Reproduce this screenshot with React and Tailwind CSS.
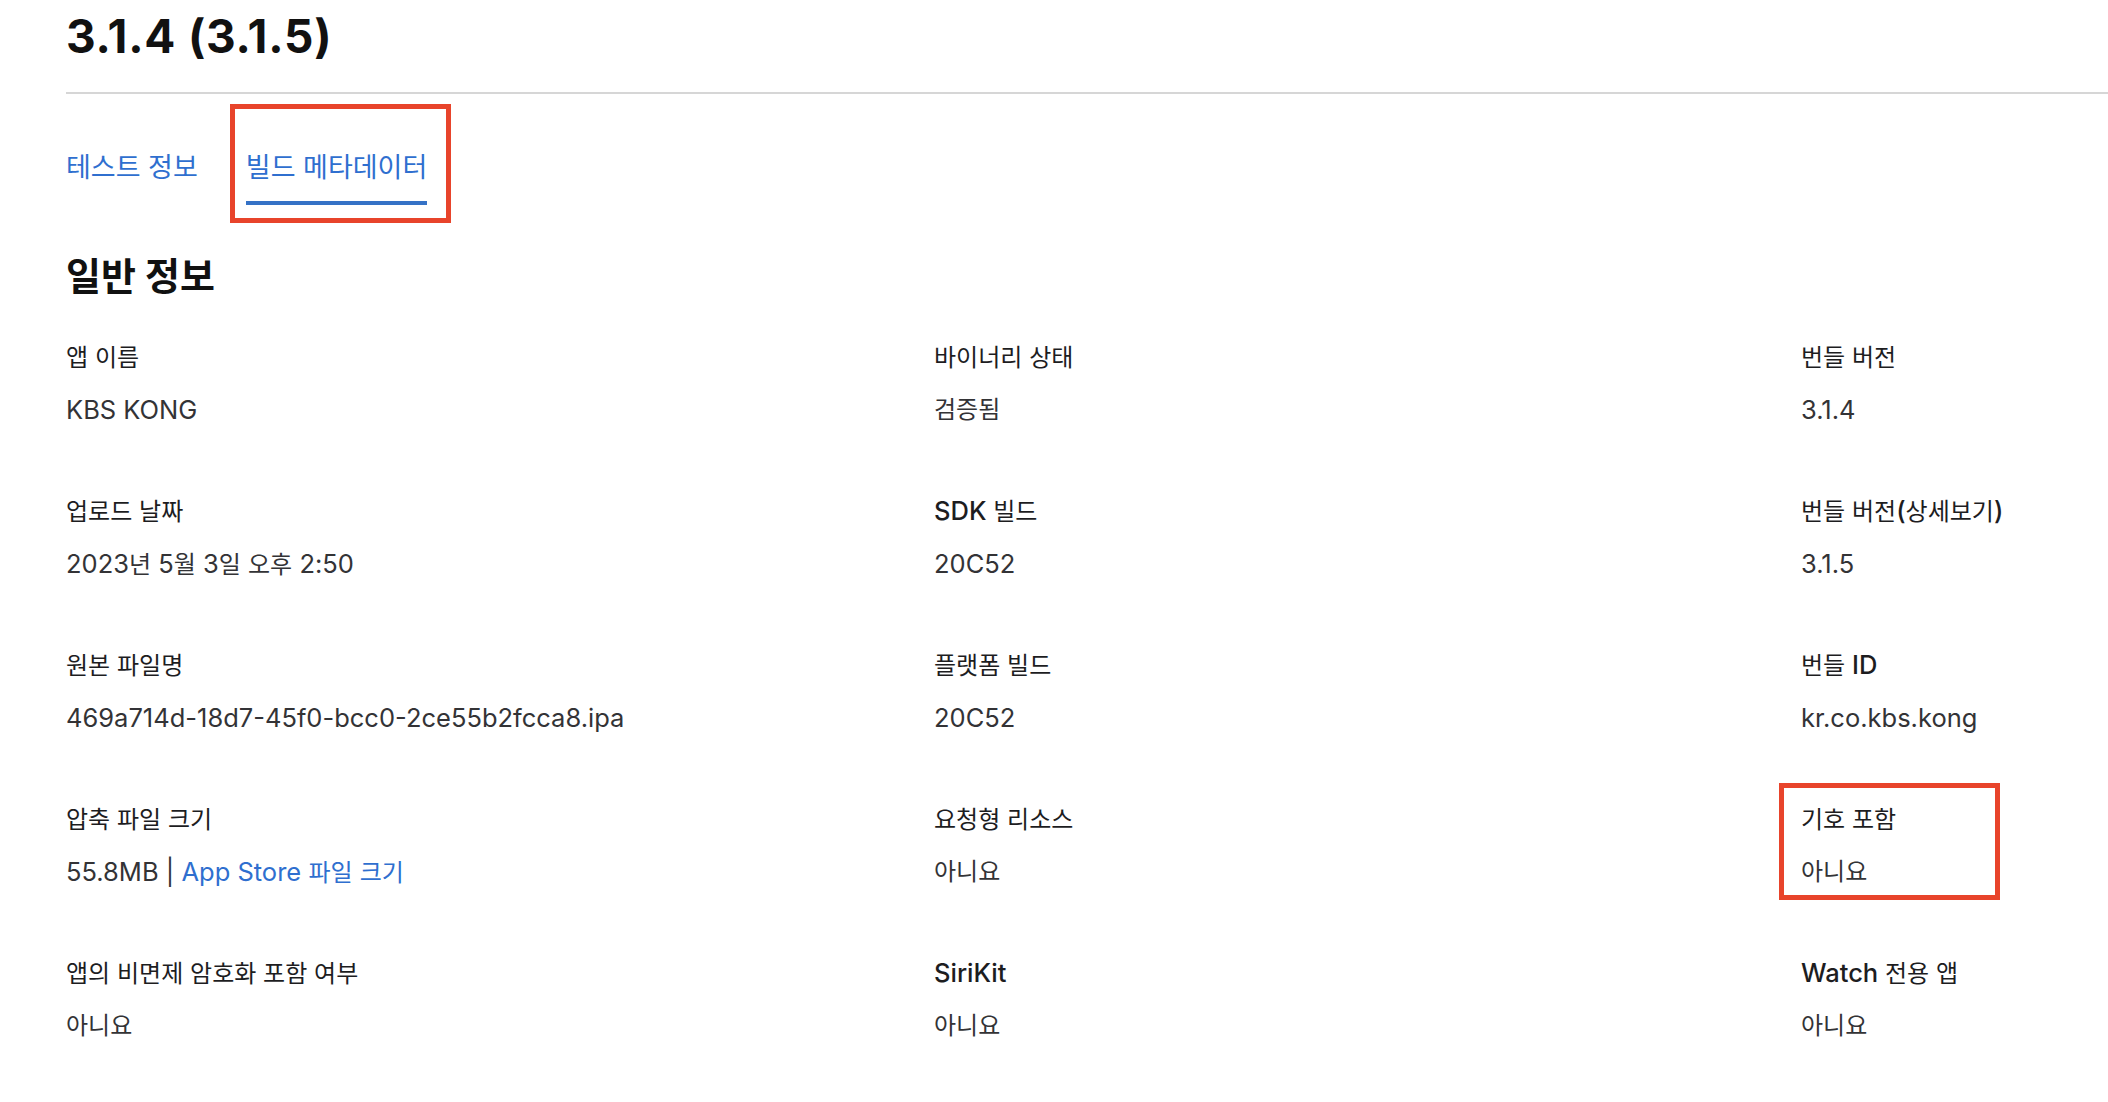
import React from "react";

const HANGUL = /([\u1100-\u11FF\u3130-\u318F\uAC00-\uD7AF]+)/;
const IS_HANGUL = /^[\u1100-\u11FF\u3130-\u318F\uAC00-\uD7AF]+$/;

function T({ text, label }) {
  return text.split(HANGUL).map((p, i) =>
    p === "" ? null : IS_HANGUL.test(p) ? (
      <span key={i} className="text-[24px]">{p}</span>
    ) : label ? (
      <span key={i} className="text-[25.5px] font-medium">{p}</span>
    ) : (
      <span key={i} className="text-[25.5px]">{p}</span>
    )
  );
}

const rows = [
  [
    ["앱 이름", "KBS KONG"],
    ["바이너리 상태", "검증됨"],
    ["번들 버전", "3.1.4"],
  ],
  [
    ["업로드 날짜", "2023년 5월 3일 오후 2:50"],
    ["SDK 빌드", "20C52"],
    ["번들 버전(상세보기)", "3.1.5"],
  ],
  [
    ["원본 파일명", "469a714d-18d7-45f0-bcc0-2ce55b2fcca8.ipa"],
    ["플랫폼 빌드", "20C52"],
    ["번들 ID", "kr.co.kbs.kong"],
  ],
  [
    ["압축 파일 크기", "__size__"],
    ["요청형 리소스", "아니요"],
    ["기호 포함", "아니요", true],
  ],
  [
    ["앱의 비면제 암호화 포함 여부", "아니요"],
    ["SiriKit", "아니요"],
    ["Watch 전용 앱", "아니요"],
  ],
];

function Cell({ label, value, boxed }) {
  return (
    <div className="relative flex flex-col gap-[21px]">
      <div className="leading-[32px] h-[32px] whitespace-nowrap text-[#1d1d1f]">
        <T text={label} label />
      </div>
      <div className="leading-[32px] h-[32px] whitespace-nowrap text-[#333336]">
        {value === "__size__" ? (
          <>
            <T text="55.8MB | " />
            <span className="text-[#2f6fcf]">
              <T text="App Store 파일 크기" />
            </span>
          </>
        ) : (
          <T text={value} />
        )}
      </div>
      {boxed && (
        <div className="absolute left-[-22px] top-[-20px] w-[221px] h-[117px] border-[5px] border-[#e8442b] pointer-events-none" />
      )}
    </div>
  );
}

export default function App() {
  return (
    <div className="w-[2108px] h-[1102px] overflow-hidden bg-white font-['Inter','Noto_Sans_CJK_KR',sans-serif]">
      <div className="pl-[66px]">
        <h1 className="pt-[10px] text-[46px] leading-[52px] font-bold text-[#111111] tracking-[0.8px]">
          3.1.4 (3.1.5)
        </h1>
        <div className="mt-[30px] h-[2px] bg-[#d6d6d6]" />

        <div className="mt-[56px] flex items-start gap-[48px] text-[27px] text-[#2f6fcf]">
          <div className="flex flex-col">
            <div className="leading-[36px] h-[36px] whitespace-nowrap">테스트 정보</div>
            <div className="mt-[15px] h-[4px]" />
          </div>
          <div className="relative flex flex-col">
            <div className="leading-[36px] h-[36px] whitespace-nowrap">빌드 메타데이터</div>
            <div className="mt-[15px] h-[4px] bg-[#3572c6]" />
            <div className="absolute left-[-16px] top-[-46px] w-[221px] h-[119px] border-[5px] border-[#e8442b]" />
          </div>
        </div>

        <h2 className="mt-[49px] text-[38px] leading-[44px] font-bold text-[#111111]">
          일반 정보
        </h2>

        <div className="mt-[43px] grid grid-cols-[868px_867px_1fr] gap-y-[69px]">
          {rows.map((r, ri) =>
            r.map((c, ci) => (
              <Cell key={ri + "-" + ci} label={c[0]} value={c[1]} boxed={c[2]} />
            ))
          )}
        </div>
      </div>
    </div>
  );
}
